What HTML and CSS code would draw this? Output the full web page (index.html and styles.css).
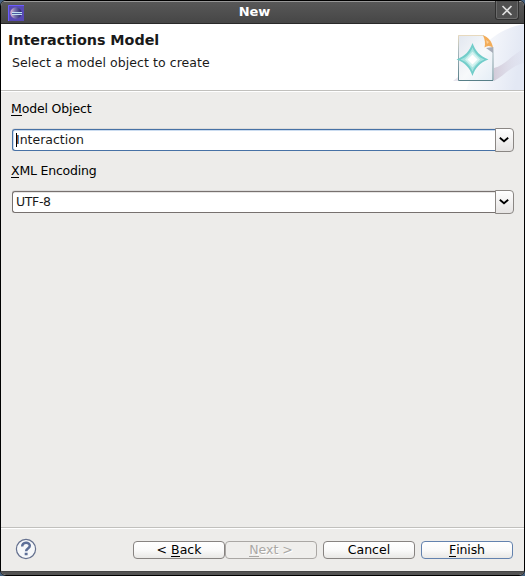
FILE: index.html
```html
<!DOCTYPE html>
<html lang="en">
<head>
<meta charset="utf-8">
<title>New</title>
<link rel="stylesheet" href="styles.css">
</head>
<body>
<main class="window">
  <header class="titlebar">
    <svg class="app-icon" width="16" height="16" viewBox="0 0 16 16">
      <defs><linearGradient id="orb"><stop offset="0" stop-color="#e5bfd5"/><stop offset=".4" stop-color="#7772ad"/><stop offset="1" stop-color="#24246a"/></linearGradient></defs>
      <path fill="#5749b4" d="M0 0h16v16H0z"/><path d="M.5 16V.5H16" fill="none" stroke="#6b5cff"/>
      <circle cx="8" cy="8" r="5.7" fill="url(#orb)"/>
      <path d="M4 7.500h10M4 9.500h10" stroke="#c3e2f2"/><path d="M4 8.500h10" stroke="#4a5ca0"/>
    </svg>
    <span class="title">New</span>
    <button class="close" aria-label="Close"><svg width="22" height="20" viewBox="0 0 22 20"><path d="M6.500 6l9 9m0-9l-9 9" stroke="#dedede" stroke-width="1.7"/></svg></button>
  </header>
  <section class="banner">
    <div class="banner-text">
      <h1>Interactions Model</h1>
      <p>Select a model object to create</p>
    </div>
    <svg class="banner-art" width="75" height="66" viewBox="449 24 75 66">
      <defs>
        <linearGradient id="sweep" x1="0" y1="0" x2="1" y2=".2"><stop offset="0" stop-color="#fff"/><stop offset=".5" stop-color="#f3f5fa"/><stop offset="1" stop-color="#e3e8f4"/></linearGradient>
        <linearGradient id="page" x1="0" y1="0" x2="1" y2="1"><stop offset="0" stop-color="#e2e7ef"/><stop offset=".55" stop-color="#f7f9fb"/><stop offset="1" stop-color="#e4edf6"/></linearGradient>
        <linearGradient id="edge" x1="0" y1="0" x2="0" y2="1"><stop offset="0" stop-color="#e7d9be"/><stop offset=".35" stop-color="#a9b9be"/><stop offset="1" stop-color="#587f88"/></linearGradient>
        <linearGradient id="shade" x1="0" x2="1"><stop offset="0" stop-color="#d3cbd9"/><stop offset="1" stop-color="#dcdfee" stop-opacity=".3"/></linearGradient>
      </defs>
      <path fill="url(#sweep)" d="M524 24c-20 4-32 12-42 24l-16 42h58z"/>
      <path fill="url(#shade)" d="M494 68c10-2 20-15 30-19v14c-12 2-20 13-30 18z"/>
      <path fill="#e8e5ee" d="M453 81l5-4v4z"/>
      <path fill="url(#page)" d="M458 35h26l9 12v34h-35z"/>
      <path fill="none" stroke="url(#edge)" d="M484 35.500h-25.500v45h34.500V47"/>
      <path fill="#a7acb8" d="M486 48l7-1v6z"/>
      <path fill="#f3ad59" d="M483 35.500c5 1 9 6 10 12-3-2-6-2-8.500 0 1-4 .5-8-1.500-12z"/>
      <path fill="#fbd09b" d="M486 40l3 2-2 2z"/>
      <path fill="#72cdca" d="M472.500 43c3 8 7 13 16 16.500-9 3.500-13 8-16 16.500-3-8.500-7-13-16-16.500 9-3.500 13-8.500 16-16.500z"/>
      <path fill="#a6e3df" d="M472.500 47.500c2.500 6 6 9.500 12 12-6 2.500-9.500 6-12 12-2.500-6-6-9.500-12-12 6-2.500 9.500-6 12-12z"/>
      <path fill="#d5f3f1" d="M472.500 51.500l7.500 8-7.500 8-7.500-8z"/><path fill="#fff" d="M472.500 54.500l5 5-5 5-5-5z"/>
    </svg>
  </section>
  <section class="form">
    <label><u>M</u>odel Object</label>
    <div class="combo focused"><div class="field"><i class="caret"></i><span>Interaction</span></div><div class="arrow"><svg width="10" height="6" viewBox="0 0 10 6"><path d="M.8 .7L5 4.300 9.200 .7" fill="none" stroke="#000" stroke-width="1.8"/></svg></div></div>
    <label><u>X</u>ML Encoding</label>
    <div class="combo"><div class="field"><span class="utf">UTF-8</span></div><div class="arrow"><svg width="10" height="6" viewBox="0 0 10 6"><path d="M.8 .7L5 4.300 9.200 .7" fill="none" stroke="#000" stroke-width="1.8"/></svg></div></div>
  </section>
  <footer class="actions">
    <svg class="help" width="22" height="22" viewBox="0 0 22 22"><circle cx="11" cy="11" r="9.600" fill="#f6f8fa" stroke="#65718f" stroke-width="1.200"/><path d="M7.200 8.600C7.200 3.700 14.800 3.600 14.800 7.800c0 2.700-3.700 2.700-3.700 5.400" fill="none" stroke="#5d6f98" stroke-width="2.500"/><path fill="#5d6f98" d="M9.700 14.700h2.900v2.600H9.700z"/></svg>
    <button class="btn">&lt; <u>B</u>ack</button>
    <button class="btn disabled" disabled><u>N</u>ext &gt;</button>
    <button class="btn cancel">Cancel</button>
    <button class="btn primary"><u>F</u>inish</button>
  </footer>
</main>
</body>
</html>
```
FILE: styles.css
```css
*, *::after { box-sizing: border-box; }
body { margin: 0; background: #45617f; font: 12.5px/16px "DejaVu Sans", sans-serif; color: #1a1a1a; }
.window { width: 525px; height: 576px; display: flex; flex-direction: column; background: #edecea; border: 1px solid #000; border-radius: 6px; overflow: hidden; }
.titlebar { height: 23px; flex: none; display: grid; grid-template-columns: 60px 1fr 60px; align-items: center; background: linear-gradient(#585858, #464646); border-top: 1px solid #989898; border-bottom: 1px solid #292929; color: #fff; }
.app-icon { margin-left: 7px; }
.title { text-align: center; font-weight: bold; font-size: 13px; margin: -2px 16px 0 0; }
.close { width: 24px; height: 20px; justify-self: end; align-self: start; margin: -2px 5px 0 0; padding: 0; border: 1px solid #303030; border-top: 0; border-radius: 0 0 3px 3px; background: #505050; box-shadow: inset 1px 0 #6b6b6b, inset -1px -1px #6b6b6b; }
.close svg { display: block; }
.banner { height: 67px; flex: none; display: flex; justify-content: space-between; background: #fff; border-bottom: 1px solid #c1c0bd; }
.banner-text { padding: 7px 0 0 7px; }
h1 { margin: 0; font-size: 14.35px; line-height: 18px; letter-spacing: -.03px; }
p { margin: 6px 0 0 4px; line-height: 16px; letter-spacing: .065px; }
.form { flex: 1; display: flex; flex-direction: column; padding: 9px 10px 0; border-top: 1px solid #fff; }
label { height: 16px; color: #000; letter-spacing: -.2px; }
label:first-child { letter-spacing: -.15px; }
u { text-decoration: none; border-bottom: 1px solid; display: inline-block; line-height: 13px; }
.combo { display: flex; align-items: center; height: 24px; margin: 11px 0 11px 1px; }
.field { flex: 1; height: 22px; display: flex; align-items: center; padding-left: 3px; background: #fff; border: 1px solid #77716f; border-right: 0; border-radius: 3px 0 0 3px; box-shadow: inset 0 1px #e6e5e4, 0 -1px #dddcdb; }
.focused .field { border-color: #4771a5; box-shadow: inset 0 1px #cbdcf0, inset 1px 0 #cbdcf0, 0 -1px #dddcdb; }
.caret { width: 1px; height: 14px; background: #000; margin-right: -1px; }
.utf { letter-spacing: -.35px; }
.arrow { width: 19px; height: 24px; display: grid; place-items: center; padding-right: 1px; border: 1px solid #8b8784; border-radius: 0 4px 4px 0; background: linear-gradient(#fff, #e6e4e3); }
.actions { height: 44px; flex: none; display: flex; padding: 12px 11px 0 14px; border-top: 1px solid #c1c0bd; box-shadow: inset 0 1px #fff; }
.help { margin: -2px auto 0 0; }
.window::after { content: ""; flex: none; height: 4px; background: #535353; border-top: 1px solid #454545; }
.btn { width: 92px; height: 18px; margin-top: 1px; padding: 0; border: 1px solid #878381; border-radius: 4px; background: linear-gradient(#fff, #fafafa 50%, #e9e8e6); font: inherit; line-height: 14px; color: #000; }
.disabled { color: #aaa8a5; border-color: #aaa7a4; background: #efeeec; text-shadow: 1px 1px #fff; }
.cancel { margin-left: 6px; }
.primary { margin-left: 6px; border-color: #6382ae; letter-spacing: -.1px; }
```
